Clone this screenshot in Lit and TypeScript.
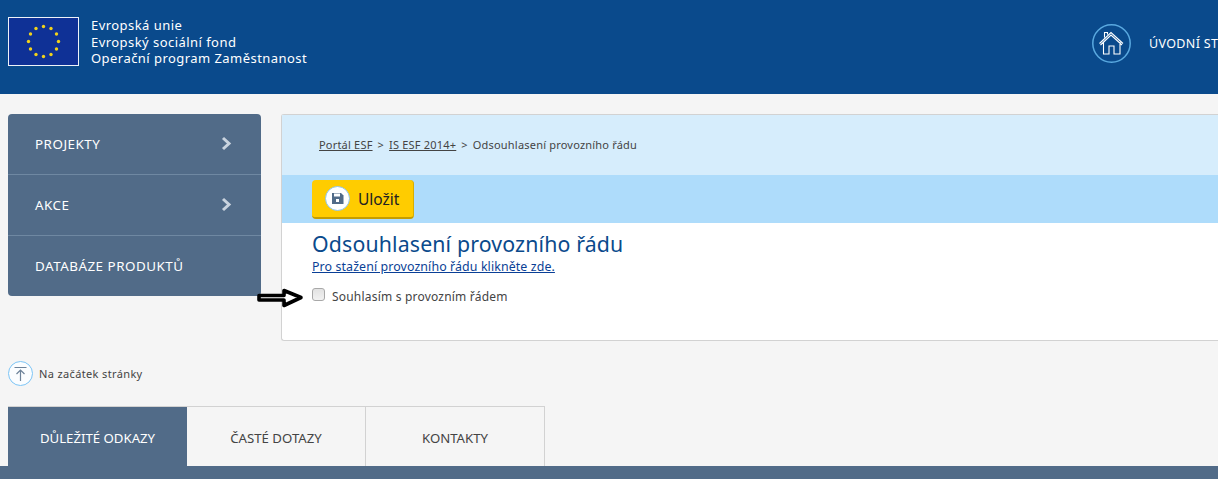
import { LitElement, html, css, svg } from "lit";
import { customElement } from "lit/decorators.js";

const stars = Array.from({ length: 12 }, (_, i) => {
  const a = (i * Math.PI) / 6;
  return svg`<circle cx=${35.5 + 15 * Math.sin(a)} cy=${24.5 - 15 * Math.cos(a)} r="1.7" fill="#f2d21a"></circle>`;
});

@customElement("app-root")
export class AppRoot extends LitElement {
  static styles = css`
    :host {
      display: block;
      width: 1218px;
      height: 479px;
      overflow: hidden;
      background: #f5f5f5;
      font-family: "Noto Sans", "DejaVu Sans", sans-serif;
      position: relative;
    }
    a { color: inherit; }
    .header {
      height: 94px;
      background: #0a4a8c;
      display: flex;
      align-items: flex-start;
      color: #fff;
      box-sizing: border-box;
      padding: 17px 0 0 8px;
      white-space: nowrap;
      overflow: hidden;
    }
    .flag { width: 71px; height: 49px; display: block; flex: none; }
    .eu {
      margin-left: 12px;
      font-size: 13px;
      line-height: 16.5px;
      letter-spacing: 0.45px;
      width: 1001px;
      flex: none;
    }
    .home { display: flex; align-items: center; gap: 18px; margin-top: 7px; flex: none; font-size: 12.5px; letter-spacing: 0.35px; }
    .home svg { display: block; }
    .body {
      display: flex;
      gap: 20px;
      padding: 20px 0 0 8px;
      align-items: flex-start;
    }
    .side {
      width: 253px;
      flex: none;
      background: #516b88;
      border-radius: 4px;
      color: #fff;
      font-size: 13.4px;
      letter-spacing: 0.5px;
    }
    .side .it {
      height: 61px;
      display: flex;
      align-items: center;
      justify-content: space-between;
      padding: 0 29px 1px 27px;
      border-top: 1px solid #6f88a2;
      box-sizing: border-box;
    }
    .side .it:first-child { border-top: 0; height: 60px; }
    .main {
      width: 1000px;
      flex: none;
      height: 227px;
      background: #fff;
      border-top: 1px solid #d2d2d2;
      border-left: 1px solid #d2d2d2;
      border-bottom: 1px solid #d2d2d2;
      border-radius: 3px 0 0 3px;
      box-sizing: border-box;
    }
    .crumb {
      height: 60px;
      background: #d6edfc;
      display: flex;
      align-items: center;
      padding: 0 0 1px 37px;
      box-sizing: border-box;
      font-size: 11px;
      letter-spacing: 0.2px;
      color: #444;
      gap: 5px;
    }
    .tool {
      height: 48px;
      background: #aedcfb;
      padding: 5px 0 0 30px;
      box-sizing: border-box;
    }
    .btn {
      width: 102px;
      height: 39px;
      background: #fc0;
      border-radius: 4px;
      border-bottom: 2px solid #c49d00;
      border-right: 1px solid #d8ae00;
      box-sizing: border-box;
      display: flex;
      align-items: center;
      gap: 8px;
      padding-left: 13px;
      font-size: 15.5px;
      color: #222;
    }
    .content { padding: 9px 0 0 30px; }
    h1 {
      margin: 0;
      font-weight: 400;
      font-size: 21.3px;
      line-height: 24px;
      letter-spacing: 0.15px;
      color: #0a4a8c;
    }
    .dl { display: block; font-size: 12.4px; line-height: 16px; color: #0a3f96; letter-spacing: 0.1px; margin-top: 3px; }
    .agree { display: flex; align-items: center; gap: 7px; margin-top: 13px; font-size: 12px; letter-spacing: 0.2px; color: #444; }
    .cb {
      width: 13px;
      height: 13px;
      border: 1px solid #a8a8a8;
      border-radius: 3px;
      box-sizing: border-box;
      background: linear-gradient(#e2e2e2, #f2f2f2);
      flex: none;
      margin-top: -4px;
    }
    .top {
      display: flex;
      align-items: center;
      gap: 6px;
      margin: 20px 0 0 8px;
      font-size: 11px;
      letter-spacing: 0.36px;
      color: #444;
      height: 25px;
    }
    .tabs { display: flex; margin: 20px 0 0 8px; height: 60px; }
    .tab {
      box-sizing: border-box;
      border: 1px solid #d2d2d2;
      border-left: 0;
      border-bottom: 0;
      display: flex;
      align-items: center;
      justify-content: center;
      padding-top: 3px;
      font-size: 13.2px;
      color: #444;
      width: 179px;
    }
    .tab.on { background: #516b88; color: #fff; border: 0; border-top: 1px solid #d2d2d2; }
    .foot { height: 13px; background: #516b88; }
    .arrow { position: absolute; left: 256px; top: 287px; display: block; }
  `;

  render() {
    const chev = html`<svg width="11" height="15" viewBox="0 0 11 15"><path d="M2 2l6 5.500L2 13" fill="none" stroke="#c9d3de" stroke-width="3"/></svg>`;
    return html`
      <div class="header">
        <svg class="flag" viewBox="0 0 71 49">
          <rect width="71" height="49" fill="#eef2f8"></rect>
          <rect x="1" y="1" width="69" height="47" fill="#0f3196"></rect>
          ${stars}
        </svg>
        <div class="eu">Evropská unie<br />Evropský sociální fond<br />Operační program Zaměstnanost</div>
        <div class="home">
          <svg width="39" height="39" viewBox="0 0 39 39">
            <circle cx="19.500" cy="19.500" r="18.700" fill="none" stroke="#5aa9e0" stroke-width="1.500"></circle>
            <path d="M7.500 19.500L19 8.500 31 19.500M8.500 21L19 11 30 21M11.500 18V30H17V22H22V30H28V18M12.500 13.500V8.500H15.500V10.500" fill="none" stroke="#fff" stroke-width="1.100"></path>
          </svg>
          <span>ÚVODNÍ STRÁNKA</span>
        </div>
      </div>
      <div class="body">
        <nav class="side">
          <div class="it"><span>PROJEKTY</span>${chev}</div>
          <div class="it"><span>AKCE</span>${chev}</div>
          <div class="it"><span>DATABÁZE PRODUKTŮ</span></div>
        </nav>
        <section class="main">
          <div class="crumb">
            <a href="#">Portál ESF</a><span>&gt;</span><a href="#">IS ESF 2014+</a><span>&gt;</span><span>Odsouhlasení provozního řádu</span>
          </div>
          <div class="tool">
            <div class="btn">
              <svg width="25" height="25" viewBox="0 0 25 25">
                <circle cx="12.500" cy="12.500" r="12" fill="#fff" stroke="#8ec4e8"></circle>
                <path d="M7 7h9l2.500 2.500V18H7z" fill="#516b88"></path>
                <rect x="9" y="7.500" width="6" height="3" fill="#fff"></rect>
                <rect x="11" y="13" width="3" height="3" fill="#fff"></rect>
              </svg>
              <span>Uložit</span>
            </div>
          </div>
          <div class="content">
            <h1>Odsouhlasení provozního řádu</h1>
            <a class="dl" href="#">Pro stažení provozního řádu klikněte zde.</a>
            <div class="agree"><span class="cb"></span><span>Souhlasím s provozním řádem</span></div>
          </div>
        </section>
      </div>
      <div class="top">
        <svg width="25" height="25" viewBox="0 0 25 25">
          <circle cx="12.500" cy="12.500" r="12" fill="#fbfdff" stroke="#7cc4f5"></circle>
          <path d="M6.500 6.500h12M12.500 20V9M8.500 13l4-4 4 4" fill="none" stroke="#6d8299" stroke-width="1.200"></path>
        </svg>
        <span>Na začátek stránky</span>
      </div>
      <div class="tabs">
        <div class="tab on">DŮLEŽITÉ ODKAZY</div>
        <div class="tab">ČASTÉ DOTAZY</div>
        <div class="tab">KONTAKTY</div>
      </div>
      <div class="foot"></div>
      <svg class="arrow" width="48" height="22" viewBox="0 0 48 22">
        <path d="M3 8.500H28V3.500L45 10.500 28 18.500V13H3z" fill="#fff" stroke="#000" stroke-width="3.600" stroke-linejoin="round"></path>
      </svg>
    `;
  }
}
